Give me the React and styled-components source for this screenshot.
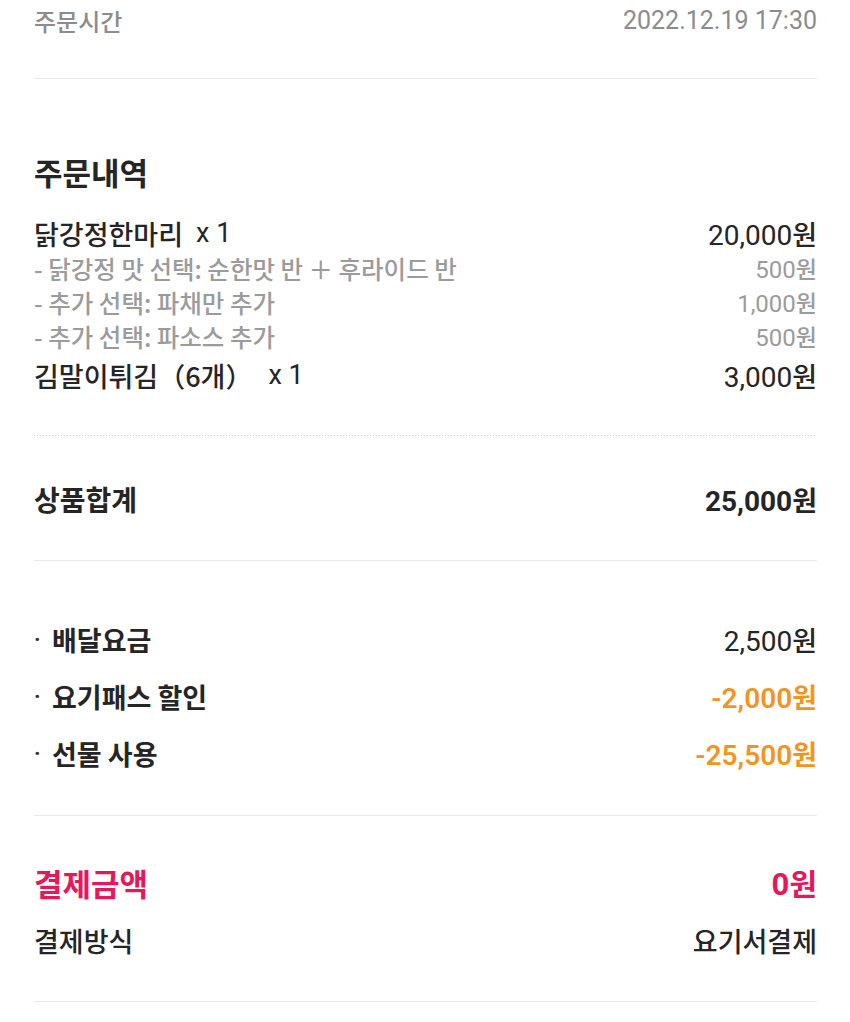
import React from 'react';
import styled, { createGlobalStyle } from 'styled-components';

const GlobalStyle = createGlobalStyle`
	body {
		margin: 0;
		background: #ffffff;
		font-family: Roboto, "Noto Sans CJK KR", sans-serif;
		color: #252525;
	}
`;

const PAGE = styled.div`
	width: 850px;
	padding: 0 33px 0 34px;
	box-sizing: border-box;
	display: flex;
	flex-direction: column;
`;

const SECTION = styled.section`
	display: flex;
	flex-direction: column;
	gap: ${(p) => p.gap || 0}px;
	padding-top: ${(p) => p.top || 0}px;
	padding-bottom: ${(p) => p.bottom || 0}px;
`;

const DIVIDER = styled.div`
	height: 1px;
	background: #e9e9e9;
`;

const DOTTED = styled.div`
	height: 1px;
	background-image: repeating-linear-gradient(to right, #cfcfcf 0 1px, transparent 1px 3px);
`;

const ROW = styled.div`
	display: flex;
	align-items: center;
	justify-content: space-between;
	height: ${(p) => p.h || 36}px;
	margin-top: ${(p) => p.mt || 0}px;
`;

const LABEL = styled.span`
	font-family: "Noto Sans CJK KR", Roboto, sans-serif;
	font-size: ${(p) => p.size || 27}px;
	font-weight: ${(p) => p.weight || 500};
	color: ${(p) => p.color || '#252525'};
	white-space: pre;
	display: flex;
	align-items: center;
`;

const LATIN = styled.span`
	font-family: Roboto, sans-serif;
	font-size: ${(p) => p.size || 27}px;
	font-weight: 400;
	margin-left: ${(p) => p.gap || 0}px;
`;

const VALUE = styled.span`
	font-family: Roboto, "Noto Sans CJK KR", sans-serif;
	font-size: ${(p) => p.size || 28}px;
	font-weight: ${(p) => p.weight || 400};
	color: ${(p) => p.color || '#252525'};
	white-space: nowrap;
`;

const WON = styled.span`
	font-family: "Noto Sans CJK KR", sans-serif;
	font-size: ${(p) => p.size || 27}px;
	font-weight: ${(p) => (p.weight > 500 ? 700 : 500)};
`;

const TITLE = styled.h2`
	margin: 0;
	height: 40px;
	line-height: 40px;
	font-family: "Noto Sans CJK KR", sans-serif;
	font-size: 31px;
	font-weight: 700;
	color: #252525;
`;

const BULLET = styled.span`
	width: 18px;
	font-family: Roboto, sans-serif;
	font-size: 22px;
	font-weight: 700;
	color: #333;
`;

const Price = ({ amount, size, wonSize, weight, color }) => (
	<VALUE size={size} weight={weight} color={color}>
		{amount}
		<WON size={wonSize || size} weight={weight}>원</WON>
	</VALUE>
);

const GRAY = '#9b9b9b';
const ORANGE = '#f2951f';
const PINK = '#e6185b';

const options = [
	{ name: '- 닭강정 맛 선택: 순한맛 반 ＋ 후라이드 반', price: '500' },
	{ name: '- 추가 선택: 파채만 추가', price: '1,000' },
	{ name: '- 추가 선택: 파소스 추가', price: '500' },
];

const charges = [
	{ name: '배달요금', price: '2,500', color: '#252525', weight: 400 },
	{ name: '요기패스 할인', price: '-2,000', color: ORANGE, weight: 600 },
	{ name: '선물 사용', price: '-25,500', color: ORANGE, weight: 600 },
];

const App = () => {
	return (
		<PAGE>
			<GlobalStyle />
			<SECTION bottom={38}>
				<ROW h={40}>
					<LABEL size={24} weight={500} color="#8c8c8c">주문시간</LABEL>
					<VALUE size={25} weight={400} color="#8c8c8c">2022.12.19 17:30</VALUE>
				</ROW>
			</SECTION>
			<DIVIDER />

			<SECTION top={73}>
				<TITLE>주문내역</TITLE>
			</SECTION>
			<SECTION top={23} bottom={42}>
				<ROW h={36}>
					<LABEL>
						닭강정한마리
						<LATIN gap={13}>x 1</LATIN>
					</LABEL>
					<Price amount="20,000" size={28} wonSize={27} />
				</ROW>
				{options.map((o) => (
					<ROW h={34} key={o.name}>
						<LABEL size={24.5} weight={500} color={GRAY}>{o.name}</LABEL>
						<Price amount={o.price} size={24} wonSize={23} color={GRAY} />
					</ROW>
				))}
				<ROW h={36} mt={4}>
					<LABEL>
						김말이튀김（6개）
						<LATIN gap={16}>x 1</LATIN>
					</LABEL>
					<Price amount="3,000" size={28} wonSize={27} />
				</ROW>
			</SECTION>
			<DOTTED />

			<SECTION top={43} bottom={41}>
				<ROW h={40}>
					<LABEL size={28} weight={700}>상품합계</LABEL>
					<Price amount="25,000" size={28} wonSize={27} weight={700} />
				</ROW>
			</SECTION>
			<DIVIDER />

			<SECTION top={58} bottom={42} gap={17}>
				{charges.map((c) => (
					<ROW h={40} key={c.name}>
						<LABEL size={27} weight={700}>
							<BULLET>·</BULLET>
							{c.name}
						</LABEL>
						<Price amount={c.price} size={28} wonSize={27} weight={c.weight} color={c.color} />
					</ROW>
				))}
			</SECTION>
			<DIVIDER />

			<SECTION top={46} bottom={41} gap={18}>
				<ROW h={40}>
					<LABEL size={31} weight={700} color={PINK}>결제금액</LABEL>
					<Price amount="0" size={31} wonSize={30} weight={700} color={PINK} />
				</ROW>
				<ROW h={40}>
					<LABEL size={27} weight={500}>결제방식</LABEL>
					<LABEL size={27} weight={500}>요기서결제</LABEL>
				</ROW>
			</SECTION>
			<DIVIDER />
		</PAGE>
	);
};

export default App;
